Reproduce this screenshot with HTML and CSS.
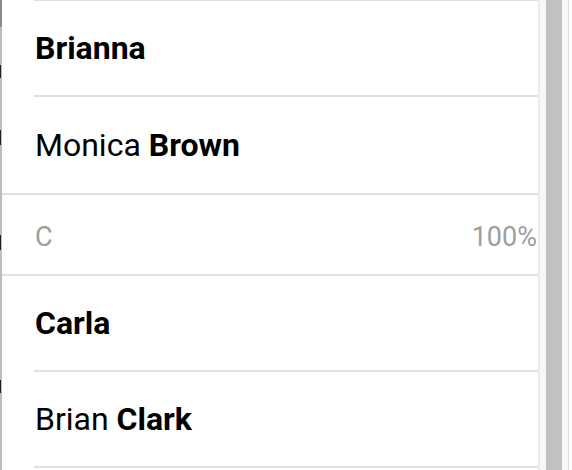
FILE: index.html
```html
<!DOCTYPE html>
<html>
<head>
<meta charset="utf-8">
<link rel="stylesheet" href="styles.css">
</head>
<body>
<div class="screen">
  <div class="edge"></div>
  <div class="list">
    <div class="rule"></div>
    <div class="item"><b>Brianna</b></div>
    <div class="item item--end">Monica&nbsp;<b>Brown</b></div>
    <div class="section"><span>C</span><span>100%</span></div>
    <div class="item"><b>Carla</b></div>
    <div class="item">Brian&nbsp;<b>Clark</b></div>
  </div>
  <div class="scrollbar"><div class="thumb"></div></div>
  <div class="frame"></div>
</div>
</body>
</html>
```
FILE: styles.css
```css
html, body {
  margin: 0;
  padding: 0;
  background: #fff;
}
.screen {
  display: flex;
  width: 572px;
  height: 470px;
  overflow: hidden;
  font-family: Roboto, "Noto Sans", sans-serif;
}
.edge {
  width: 2px;
  flex: none;
  background:
    linear-gradient(to bottom,
      transparent 0 65px, #1e1e22 65px 78px, transparent 78px 130px,
      #1e1e22 130px 145px, transparent 145px 235px, #1e1e22 235px 250px,
      transparent 250px 380px, #1e1e22 380px 393px, transparent 393px) 0 0 / 1px 100% no-repeat,
    linear-gradient(to bottom, #8d8892 0 27px, #bdbdbd 27px);
}
.list {
  flex: 1;
  background: #fff;
  display: flex;
  flex-direction: column;
}
.rule {
  height: 1px;
  margin-left: 32px;
  background: #e0e0e0;
}
.item {
  height: 94px;
  margin-left: 32px;
  border-bottom: 2px solid #e0e0e0;
  display: flex;
  align-items: center;
  font-size: 32px;
  color: #000;
  padding-left: 1px;
}
.item b {
  font-weight: 700;
}
.item--end {
  height: 96px;
  border-bottom: none;
}
.section {
  border-top: 2px solid #e0e0e0;
  border-bottom: 2px solid #e0e0e0;
  display: flex;
  align-items: center;
  justify-content: space-between;
  padding: 5px 1px 0 33px;
  box-sizing: border-box;
  height: 83px;
  font-size: 27px;
  color: #9e9e9e;
}
.scrollbar {
  flex: none;
  width: 30px;
  border-left: 2px solid #ececec;
  background: #f8f8f8;
  padding-left: 6px;
  box-sizing: border-box;
}
.thumb {
  width: 16px;
  height: 100%;
  background: #c1c1c1;
}
.frame {
  flex: none;
  width: 4px;
  border-left: 1px solid #dcdce2;
  box-sizing: border-box;
  background: #fff;
}
```
